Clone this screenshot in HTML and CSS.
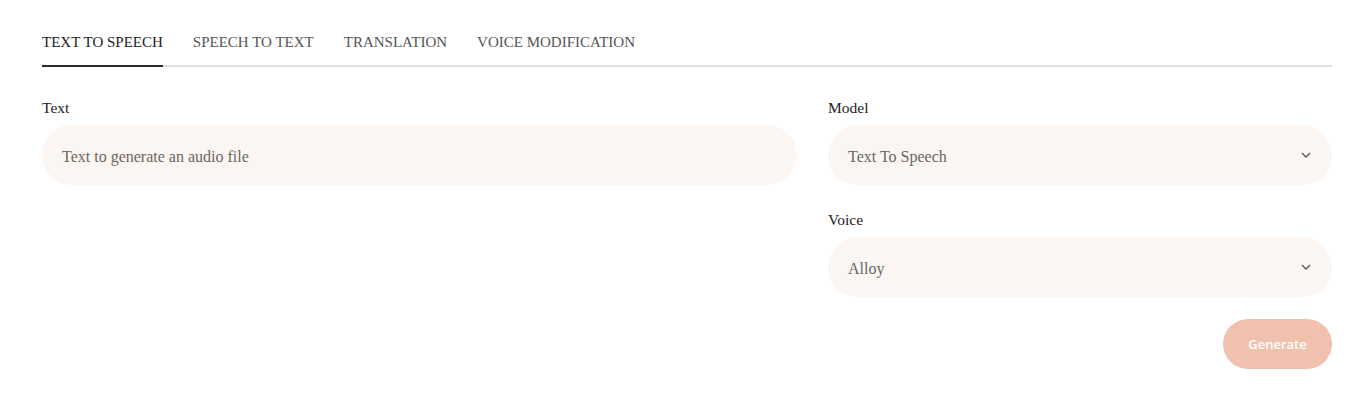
FILE: index.html
```html
<!DOCTYPE html>
<html>
<head>
<meta charset="utf-8">
<link rel="stylesheet" href="styles.css">
</head>
<body>
<div class="page">
  <nav class="tabs">
    <div class="tab active">TEXT TO SPEECH</div>
    <div class="tab">SPEECH TO TEXT</div>
    <div class="tab">TRANSLATION</div>
    <div class="tab">VOICE MODIFICATION</div>
  </nav>
  <form class="form">
    <div class="col">
      <div class="field">
        <label class="label">Text</label>
        <input class="input" type="text" placeholder="Text to generate an audio file">
      </div>
    </div>
    <div class="col">
      <div class="field">
        <label class="label">Model</label>
        <div class="select"><span>Text To Speech</span>
          <svg class="chev" width="10" height="6" viewBox="0 0 10 6"><path d="M1 1l4 4 4-4" fill="none" stroke="#555" stroke-width="1.3"/></svg>
        </div>
      </div>
      <div class="field">
        <label class="label">Voice</label>
        <div class="select"><span>Alloy</span>
          <svg class="chev" width="10" height="6" viewBox="0 0 10 6"><path d="M1 1l4 4 4-4" fill="none" stroke="#555" stroke-width="1.3"/></svg>
        </div>
      </div>
      <div class="actions">
        <button type="button" class="btn">Generate</button>
      </div>
    </div>
  </form>
</div>
</body>
</html>
```
FILE: styles.css
```css
* { box-sizing: border-box; }
body {
  margin: 0;
  background: #fff;
  font-family: "Liberation Serif", "Times New Roman", serif;
  color: #222;
}
.page { padding: 32px 37px 0 42px; }
.tabs {
  display: flex;
  gap: 30px;
  border-bottom: 2px solid #e0e0e0;
}
.tab {
  font-size: 15px;
  line-height: 20px;
  color: #555;
  padding-bottom: 13px;
  margin-bottom: -2px;
  border-bottom: 2px solid transparent;
}
.tab.active { color: #222; border-bottom-color: #2a2a2a; }
.form {
  display: grid;
  grid-template-columns: 755fr 504fr;
  gap: 31px;
  margin-top: 31px;
}
.col { display: flex; flex-direction: column; gap: 25px; }
.field { display: flex; flex-direction: column; }
.label { font-size: 15.5px; line-height: 20px; color: #222; margin-bottom: 7px; }
.input, .select {
  height: 60px;
  border-radius: 30px;
  background: #fbf6f1;
  border: none;
  padding: 3px 20px 0;
  font-family: "Liberation Serif", "Times New Roman", serif;
  font-size: 16px;
  color: #666;
  outline: none;
}
.input::placeholder { color: #6b6764; }
.select { display: flex; align-items: center; justify-content: space-between; padding-right: 21px; }
.chev { display: block; margin-top: -3px; }
.actions { display: flex; justify-content: flex-end; margin-top: -3px; }
.btn {
  width: 109px;
  height: 50px;
  border-radius: 25px;
  border: none;
  background: #f0c2ae;
  color: #fff;
  font-family: "Open Sans", sans-serif;
  font-weight: 600;
  font-size: 13px;
}
```
